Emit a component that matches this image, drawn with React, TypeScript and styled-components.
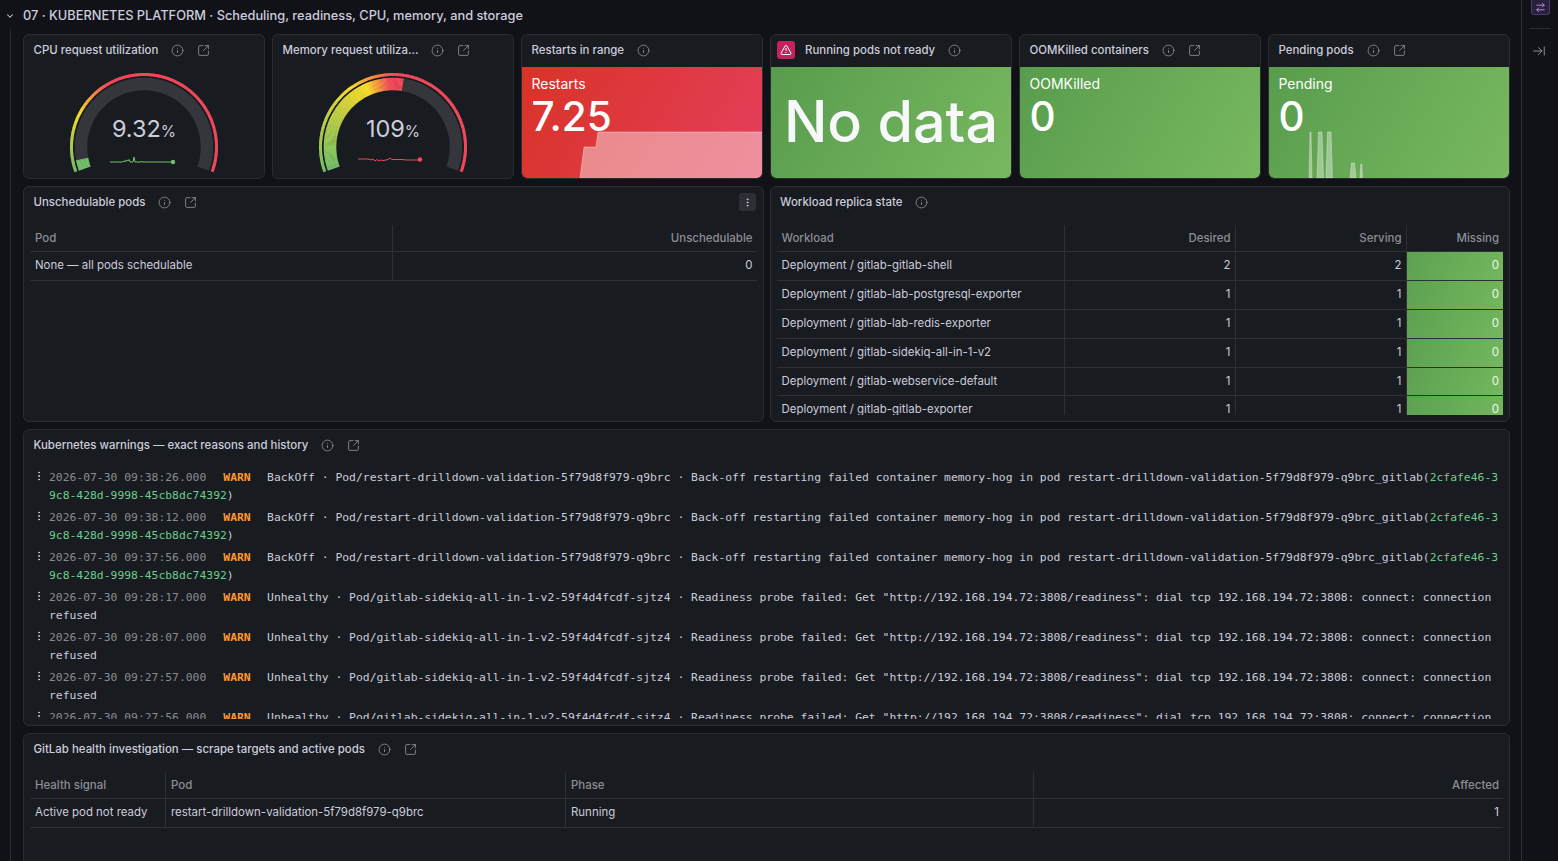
import React from 'react';
import styled, { createGlobalStyle } from 'styled-components';
import {
  ArrowRightLeft,
  ArrowRightToLine,
  ChevronDown,
  EllipsisVertical,
  Info,
  SquareArrowOutUpRight,
  TriangleAlert,
} from 'lucide-react';

const GlobalStyle = createGlobalStyle`
  html, body {
    margin: 0;
    height: 100%;
    background: #111217;
    color: #ccccdc;
    font-family: Inter, "Noto Sans", sans-serif;
  }
`;

const Page = styled.div`
  display: flex;
  height: 861px;
  overflow: hidden;
`;

const Main = styled.main`
  flex: 1;
  min-width: 0;
  padding-right: 11px;
`;

const SectionHeader = styled.div`
  display: flex;
  align-items: center;
  height: 29px;
  padding: 2px 0 0 5px;
  gap: 8px;
  box-sizing: border-box;
  font-size: 12.8px;
  font-weight: 500;
  color: #ccccdc;
`;

const SectionBody = styled.div`
  display: flex;
  flex-direction: column;
  gap: 7px;
  margin-left: 10px;
  padding: 5px 0 0 12px;
  height: 832px;
  box-sizing: border-box;
  border-left: 1px solid #2c2d33;
`;

const StatRow = styled.div`
  display: grid;
  grid-template-columns: repeat(6, 1fr);
  gap: 7px;
`;

const TableRow = styled.div`
  display: grid;
  grid-template-columns: 1fr 1fr;
  gap: 6px;
`;

const Panel = styled.section<{ $height: number }>`
  position: relative;
  display: flex;
  flex: none;
  flex-direction: column;
  height: ${(p) => p.$height}px;
  box-sizing: border-box;
  background: #181b1f;
  border: 1px solid #2a2c32;
  border-radius: 6px;
  overflow: hidden;
`;

const PanelHeader = styled.header`
  display: flex;
  align-items: center;
  flex: none;
  gap: 13px;
  height: 32px;
  padding: 0 9.5px 2px;
  box-sizing: border-box;
  color: #95969e;
`;

const PanelTitle = styled.h2`
  margin: 0;
  font-size: 11.45px;
  font-weight: 500;
  white-space: nowrap;
  color: #ccccdc;
`;

const AlertHeader = styled(PanelHeader)`
  padding-left: 6px;
  gap: 10px;

  ${PanelTitle} {
    margin-right: 3px;
  }
`;

const HeaderIcons = styled.span`
  display: flex;
  align-items: center;
  gap: 13px;
`;

const AlertBadge = styled.span`
  display: flex;
  align-items: center;
  justify-content: center;
  width: 18px;
  height: 18px;
  border-radius: 3px;
  background: #c4215f;
  color: #fff;
`;

const MenuButton = styled.button`
  position: absolute;
  top: 6px;
  right: 7px;
  display: flex;
  align-items: center;
  justify-content: center;
  width: 17px;
  height: 18px;
  padding: 0;
  border: 0;
  border-radius: 3px;
  background: #2c2f35;
  color: #ccccdc;
`;

const GaugeBody = styled.div`
  position: relative;
  flex: 1;
`;

const GaugeValue = styled.div`
  position: absolute;
  top: 49px;
  left: 0;
  right: 0;
  text-align: center;
  font-size: 23.5px;
  line-height: 26px;
  color: #ccccdc;
`;

const GaugeUnit = styled.span`
  font-size: 15.5px;
`;

const StatBody = styled.div<{ $tone: 'red' | 'green' }>`
  position: relative;
  flex: 1;
  padding: 8px 9.5px;
  color: #fff;
  overflow: hidden;
  border-radius: 0 0 5px 5px;
  background: ${(p) =>
    p.$tone === 'red'
      ? 'linear-gradient(120deg, #d83327, #e43f5c)'
      : 'linear-gradient(120deg, #589c4d, #78b860)'};
`;

const StatLabel = styled.div`
  position: relative;
  font-size: 14px;
  line-height: 18px;
  font-weight: 400;
`;

const StatValue = styled.div`
  position: relative;
  margin-top: 1px;
  font-size: 40.5px;
  line-height: 46px;
  font-weight: 500;
`;

const NoData = styled.div`
  font-size: 57.5px;
  line-height: 70px;
  font-weight: 500;
  text-align: center;
  margin-top: 11px;
  color: #f7f8fa;
`;

const StatSpark = styled.svg`
  position: absolute;
  left: 0;
  bottom: 0;
`;

const Table = styled.div`
  flex: 1;
  min-height: 0;
  margin: 6px 6px 6px;
  overflow: hidden;
  font-size: 11.45px;
`;

const Row = styled.div<{ $cols: string; $head?: boolean }>`
  display: grid;
  grid-template-columns: ${(p) => p.$cols};
  height: ${(p) => (p.$head ? 27 : 28.9)}px;
  box-sizing: border-box;
  border-bottom: 1px solid #2e3035;
  color: ${(p) => (p.$head ? '#8e8e96' : '#ccccdc')};
  font-weight: ${(p) => (p.$head ? 500 : 400)};

  & > div {
    padding-bottom: ${(p) => (p.$head ? 1 : 2)}px;
  }
`;

const Cell = styled.div<{ $right?: boolean; $good?: boolean }>`
  display: flex;
  align-items: center;
  justify-content: ${(p) => (p.$right ? 'flex-end' : 'flex-start')};
  padding-left: ${(p) => (p.$right ? 4 : 5)}px;
  padding-right: ${(p) => (p.$right ? 4 : 5)}px;
  border-right: 1px solid #2e3035;
  white-space: nowrap;
  min-width: 0;

  &:last-child {
    border-right: 0;
  }

  ${(p) =>
    p.$good &&
    `
    background: linear-gradient(120deg, #5ca150, #73b75e);
    color: #eef4ea;
  `}
`;

const LogList = styled.div`
  flex: 1;
  min-height: 0;
  margin-bottom: 6px;
  padding: 6px 9px 0 9px;
  overflow: hidden;
  display: flex;
  flex-direction: column;
  gap: 4px;
  font-family: "DejaVu Sans Mono", "Liberation Mono", monospace;
  font-size: 11.36px;
  line-height: 18px;
  color: #ccccdc;
`;

const LogEntry = styled.div`
  display: flex;
  flex: none;
  align-items: flex-start;
`;

const LogMenu = styled.span`
  display: flex;
  flex: none;
  width: 16px;
  height: 18px;
  align-items: center;
  margin-top: -1px;
  color: #ccccdc;
`;

const LogText = styled.div`
  white-space: pre;
`;

const LogTime = styled.span`
  color: #8a8b92;
  margin-right: 17px;
`;

const LogLevel = styled.span`
  color: #ff9830;
  font-weight: 700;
  margin-right: 16.4px;
`;

const LogId = styled.span`
  color: #6ccf8e;
`;

const Rail = styled.aside`
  flex: none;
  width: 37px;
  box-sizing: border-box;
  border-left: 1px solid #2c2d33;
  display: flex;
  flex-direction: column;
  align-items: center;
`;

const RailToggle = styled.button`
  display: flex;
  align-items: center;
  justify-content: center;
  width: 19px;
  height: 15px;
  padding: 0;
  background: #2a1f3d;
  border: 1px solid #4c3a6b;
  border-top: 0;
  border-radius: 0 0 3px 3px;
  color: #c8a6ea;
`;

const RailDivider = styled.div`
  width: 22px;
  height: 1px;
  margin: 13px 0 15px;
  background: #2c2d33;
`;

const RailIcon = styled.span`
  display: flex;
  margin-right: 2px;
  color: #9a9ba3;
`;

type Rgb = [number, number, number];
type Stop = [number, Rgb];

const GREEN: Rgb = [115, 191, 105];
const YELLOW: Rgb = [250, 222, 42];
const RED: Rgb = [242, 73, 92];
const CX = 120;
const CY = 80;
const START = -110;
const END = 110;

function polar(radius: number, angle: number) {
  const rad = (angle * Math.PI) / 180;
  return [CX + radius * Math.sin(rad), CY - radius * Math.cos(rad)];
}

function arc(radius: number, from: number, to: number) {
  const [x0, y0] = polar(radius, from);
  const [x1, y1] = polar(radius, to);
  const large = to - from > 180 ? 1 : 0;
  return `M${x0.toFixed(2)} ${y0.toFixed(2)}A${radius} ${radius} 0 ${large} 1 ${x1.toFixed(2)} ${y1.toFixed(2)}`;
}

function colorAt(stops: Stop[], angle: number) {
  for (let i = 1; i < stops.length; i++) {
    const [a0, c0] = stops[i - 1];
    const [a1, c1] = stops[i];
    if (angle <= a1) {
      const t = Math.max(0, (angle - a0) / (a1 - a0));
      const mix = c0.map((v, n) => Math.round(v + (c1[n] - v) * t));
      return `rgb(${mix.join(',')})`;
    }
  }
  return `rgb(${stops[stops.length - 1][1].join(',')})`;
}

function GradientArc(props: { radius: number; width: number; from: number; to: number; stops: Stop[] }) {
  const { radius, width, from, to, stops } = props;
  const parts = [];
  for (let a = from; a < to; a += 1) {
    parts.push(
      <path
        key={a}
        d={arc(radius, a, Math.min(a + 1.4, to))}
        fill="none"
        stroke={colorAt(stops, a)}
        strokeWidth={width}
      />,
    );
  }
  return <>{parts}</>;
}

type GaugeProps = {
  value: string;
  valueEnd: number;
  rim: Stop[];
  band: Stop[];
  spark: string;
  dot: [number, number];
  color: string;
};

function Gauge({ value, valueEnd, rim, band, spark, dot, color }: GaugeProps) {
  return (
    <GaugeBody>
      <svg width="240" height="111" viewBox="0 0 240 111">
        <path d={arc(63, valueEnd, END)} fill="none" stroke="#35363b" strokeWidth="12.5" />
        <GradientArc radius={63} width={12.5} from={START} to={valueEnd} stops={band} />
        <GradientArc radius={72.5} width={3} from={START} to={END} stops={rim} />
        <path d={spark} fill="none" stroke={color} strokeWidth="1" />
        <circle cx={dot[0]} cy={dot[1]} r="2.2" fill={color} />
      </svg>
      <GaugeValue>
        {value}
        <GaugeUnit>%</GaugeUnit>
      </GaugeValue>
    </GaugeBody>
  );
}

function HeaderActions({ link = true }: { link?: boolean }) {
  return (
    <HeaderIcons>
      <Info size={13} strokeWidth={1.5} />
      {link && <SquareArrowOutUpRight size={13} strokeWidth={1.5} />}
    </HeaderIcons>
  );
}

const POD = 'Pod/restart-drilldown-validation-5f79d8f979-q9brc';
const POD_NAME = 'restart-drilldown-validation-5f79d8f979-q9brc_gitlab';
const SIDEKIQ = 'Pod/gitlab-sidekiq-all-in-1-v2-59f4d4fcdf-sjtz4';
const PROBE =
  'Readiness probe failed: Get "http://192.168.194.72:3808/readiness": dial tcp 192.168.194.72:3808: connect: connection';

const backOffTimes = ['2026-07-30 09:38:26.000', '2026-07-30 09:38:12.000', '2026-07-30 09:37:56.000'];
const probeTimes = [
  '2026-07-30 09:28:17.000',
  '2026-07-30 09:28:07.000',
  '2026-07-30 09:27:57.000',
  '2026-07-30 09:27:56.000',
];

const workloads = [
  ['Deployment / gitlab-gitlab-shell', 2, 2],
  ['Deployment / gitlab-lab-postgresql-exporter', 1, 1],
  ['Deployment / gitlab-lab-redis-exporter', 1, 1],
  ['Deployment / gitlab-sidekiq-all-in-1-v2', 1, 1],
  ['Deployment / gitlab-webservice-default', 1, 1],
  ['Deployment / gitlab-gitlab-exporter', 1, 1],
];

const WORKLOAD_COLS = '288px 171px 171px 1fr';
const SCHED_COLS = '1fr 1fr';
const HEALTH_COLS = '136px 400px 468px 1fr';

export default function App() {
  return (
    <Page>
      <GlobalStyle />
      <Main>
        <SectionHeader>
          <ChevronDown size={10} strokeWidth={2.5} />
          07 · KUBERNETES PLATFORM · Scheduling, readiness, CPU, memory, and storage
        </SectionHeader>
        <SectionBody>
          <StatRow>
            <Panel $height={145}>
              <PanelHeader>
                <PanelTitle>CPU request utilization</PanelTitle>
                <HeaderActions />
              </PanelHeader>
              <Gauge
                value="9.32"
                valueEnd={-101}
                rim={[
                  [-110, GREEN],
                  [-62, YELLOW],
                  [-30, RED],
                ]}
                band={[
                  [-110, GREEN],
                  [110, GREEN],
                ]}
                spark="M86 95H98L100 94L101 95L102 93L104 94L105 92.5L106 95H109L110 90L111 95H116L118 94.5L119 95H148"
                dot={[149, 95]}
                color="#73bf69"
              />
            </Panel>
            <Panel $height={145}>
              <PanelHeader>
                <PanelTitle>Memory request utiliza...</PanelTitle>
                <HeaderActions />
              </PanelHeader>
              <Gauge
                value="109"
                valueEnd={9}
                rim={[
                  [-110, GREEN],
                  [-36, YELLOW],
                  [0, RED],
                ]}
                band={[
                  [-110, GREEN],
                  [-24, YELLOW],
                  [-3, RED],
                ]}
                spark="M85 92H95L98 93L100 92L102 94L104 92.5L106 94L108 93L110 93.5L113 93L115 92.5L117 91L119 92.5L128 92.5L134 93H147"
                dot={[147, 92.5]}
                color="#f2495c"
              />
            </Panel>
            <Panel $height={145}>
              <PanelHeader>
                <PanelTitle>Restarts in range</PanelTitle>
                <HeaderActions link={false} />
              </PanelHeader>
              <StatBody $tone="red">
                <StatSpark width="240" height="112" viewBox="0 0 240 112">
                  <path d="M58 112L62 81H74L76 66H240V112Z" fill="rgba(255,255,255,0.42)" />
                  <path d="M58 112L62 81H74L76 66H240" fill="none" stroke="rgba(255,255,255,0.35)" />
                </StatSpark>
                <StatLabel>Restarts</StatLabel>
                <StatValue>7.25</StatValue>
              </StatBody>
            </Panel>
            <Panel $height={145}>
              <AlertHeader>
                <AlertBadge>
                  <TriangleAlert size={12} strokeWidth={2} />
                </AlertBadge>
                <PanelTitle>Running pods not ready</PanelTitle>
                <HeaderActions link={false} />
              </AlertHeader>
              <StatBody $tone="green">
                <NoData>No data</NoData>
              </StatBody>
            </Panel>
            <Panel $height={145}>
              <PanelHeader>
                <PanelTitle>OOMKilled containers</PanelTitle>
                <HeaderActions />
              </PanelHeader>
              <StatBody $tone="green">
                <StatLabel>OOMKilled</StatLabel>
                <StatValue>0</StatValue>
              </StatBody>
            </Panel>
            <Panel $height={145}>
              <PanelHeader>
                <PanelTitle>Pending pods</PanelTitle>
                <HeaderActions />
              </PanelHeader>
              <StatBody $tone="green">
                <StatSpark width="240" height="112" viewBox="0 0 240 112">
                  <g fill="rgba(255,255,255,0.38)" stroke="rgba(255,255,255,0.4)" strokeWidth="0.8">
                    <path d="M40 112L41 66H42L43 112Z" />
                    <path d="M48 112L49.5 66H53L54.5 112Z" />
                    <path d="M57 112L58.5 66H62L63.5 112Z" />
                    <path d="M81 112L82.5 97H85.5L87 112Z" />
                    <path d="M91 112L91.8 98H92.8L93.6 112Z" />
                  </g>
                </StatSpark>
                <StatLabel>Pending</StatLabel>
                <StatValue>0</StatValue>
              </StatBody>
            </Panel>
          </StatRow>

          <TableRow>
            <Panel $height={236}>
              <PanelHeader>
                <PanelTitle>Unschedulable pods</PanelTitle>
                <HeaderActions />
              </PanelHeader>
              <MenuButton aria-label="Menu">
                <EllipsisVertical size={11} strokeWidth={2} />
              </MenuButton>
              <Table>
                <Row $cols={SCHED_COLS} $head>
                  <Cell>Pod</Cell>
                  <Cell $right>Unschedulable</Cell>
                </Row>
                <Row $cols={SCHED_COLS}>
                  <Cell>None — all pods schedulable</Cell>
                  <Cell $right>0</Cell>
                </Row>
              </Table>
            </Panel>
            <Panel $height={236}>
              <PanelHeader>
                <PanelTitle>Workload replica state</PanelTitle>
                <HeaderActions link={false} />
              </PanelHeader>
              <Table>
                <Row $cols={WORKLOAD_COLS} $head>
                  <Cell>Workload</Cell>
                  <Cell $right>Desired</Cell>
                  <Cell $right>Serving</Cell>
                  <Cell $right>Missing</Cell>
                </Row>
                {workloads.map(([name, desired, serving]) => (
                  <Row $cols={WORKLOAD_COLS} key={name}>
                    <Cell>{name}</Cell>
                    <Cell $right>{desired}</Cell>
                    <Cell $right>{serving}</Cell>
                    <Cell $right $good>
                      0
                    </Cell>
                  </Row>
                ))}
              </Table>
            </Panel>
          </TableRow>

          <Panel $height={297}>
            <PanelHeader>
              <PanelTitle>Kubernetes warnings — exact reasons and history</PanelTitle>
              <HeaderActions />
            </PanelHeader>
            <LogList>
              {backOffTimes.map((time) => (
                <LogEntry key={time}>
                  <LogMenu>
                    <EllipsisVertical size={12} strokeWidth={2} />
                  </LogMenu>
                  <LogText>
                    <LogTime>{time}</LogTime>
                    <LogLevel>WARN</LogLevel>
                    {`BackOff · ${POD} · Back-off restarting failed container memory-hog in pod ${POD_NAME}(`}
                    <LogId>2cfafe46-3</LogId>
                    <br />
                    <LogId>9c8-428d-9998-45cb8dc74392</LogId>)
                  </LogText>
                </LogEntry>
              ))}
              {probeTimes.map((time) => (
                <LogEntry key={time}>
                  <LogMenu>
                    <EllipsisVertical size={12} strokeWidth={2} />
                  </LogMenu>
                  <LogText>
                    <LogTime>{time}</LogTime>
                    <LogLevel>WARN</LogLevel>
                    {`Unhealthy · ${SIDEKIQ} · ${PROBE}`}
                    <br />
                    refused
                  </LogText>
                </LogEntry>
              ))}
            </LogList>
          </Panel>

          <Panel $height={200}>
            <PanelHeader>
              <PanelTitle>GitLab health investigation — scrape targets and active pods</PanelTitle>
              <HeaderActions />
            </PanelHeader>
            <Table>
              <Row $cols={HEALTH_COLS} $head>
                <Cell>Health signal</Cell>
                <Cell>Pod</Cell>
                <Cell>Phase</Cell>
                <Cell $right>Affected</Cell>
              </Row>
              <Row $cols={HEALTH_COLS}>
                <Cell>Active pod not ready</Cell>
                <Cell>restart-drilldown-validation-5f79d8f979-q9brc</Cell>
                <Cell>Running</Cell>
                <Cell $right>1</Cell>
              </Row>
            </Table>
          </Panel>
        </SectionBody>
      </Main>
      <Rail>
        <RailToggle aria-label="Toggle">
          <ArrowRightLeft size={11} strokeWidth={1.75} />
        </RailToggle>
        <RailDivider />
        <RailIcon>
          <ArrowRightToLine size={14} strokeWidth={1.5} />
        </RailIcon>
      </Rail>
    </Page>
  );
}
